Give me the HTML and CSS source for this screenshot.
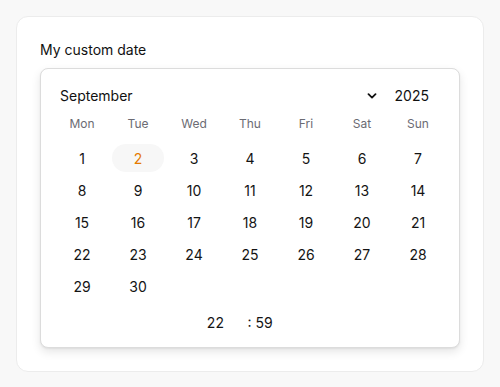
FILE: index.html
```html
<!DOCTYPE html>
<html>
<head>
<meta charset="utf-8">
<link rel="stylesheet" href="styles.css">
</head>
<body>
<div class="card">
  <div class="label">My custom date</div>
  <div class="picker">
    <div class="header">
      <span class="month">September</span>
      <svg class="chev" width="10" height="6" viewBox="0 0 10 6"><path d="M1.5 1.2 L5 4.6 L8.5 1.2" fill="none" stroke="#111" stroke-width="1.8" stroke-linecap="round" stroke-linejoin="round"/></svg>
      <span class="year">2025</span>
    </div>
    <div class="grid weekdays">
      <span>Mon</span><span>Tue</span><span>Wed</span><span>Thu</span><span>Fri</span><span>Sat</span><span>Sun</span>
    </div>
    <div class="grid days">
      <span>1</span><span class="today">2</span><span>3</span><span>4</span><span>5</span><span>6</span><span>7</span>
      <span>8</span><span>9</span><span>10</span><span>11</span><span>12</span><span>13</span><span>14</span>
      <span>15</span><span>16</span><span>17</span><span>18</span><span>19</span><span>20</span><span>21</span>
      <span>22</span><span>23</span><span>24</span><span>25</span><span>26</span><span>27</span><span>28</span>
      <span>29</span><span>30</span>
    </div>
    <div class="time">
      <span class="hour">22</span>
      <span class="minute">: 59</span>
    </div>
  </div>
</div>
</body>
</html>
```
FILE: styles.css
```css
html, body {
  margin: 0;
  padding: 0;
  background: #f8f8f8;
}
body {
  padding: 16px;
  font-family: Inter, "Noto Sans", sans-serif;
  color: #141414;
}
.card {
  width: 468px;
  height: 356px;
  box-sizing: border-box;
  background: #fff;
  border: 1px solid #ececec;
  border-radius: 12px;
  padding: 23px 23px 23px;
}
.label {
  font-size: 14px;
  line-height: 20px;
  height: 20px;
  margin-bottom: 8px;
  color: #111;
}
.picker {
  box-sizing: border-box;
  width: 420px;
  height: 280px;
  border: 1px solid #dcdcdc;
  border-radius: 8px;
  background: #fff;
  box-shadow: 0 4px 10px rgba(0,0,0,0.10), 0 1px 2px rgba(0,0,0,0.06);
  padding: 14px 13px 0;
}
.header {
  display: flex;
  align-items: center;
  height: 24px;
  padding: 0 17px 0 6px;
  font-size: 14px;
  color: #111;
}
.month { flex: 1; }
.chev { margin-right: 18px; margin-top: 1px; }
.year { font-size: 14px; }
.grid {
  display: grid;
  grid-template-columns: repeat(7, 56px);
}
.weekdays {
  margin-top: 7px;
  height: 20px;
  line-height: 20px;
  font-size: 12px;
  color: #6b6b73;
  text-align: center;
}
.days {
  margin-top: 8px;
  grid-auto-rows: 32px;
  font-size: 14px;
  color: #141414;
}
.days span {
  display: flex;
  align-items: center;
  justify-content: center;
  margin: 2px;
  border-radius: 14px;
}
.days .today {
  background: #f7f7f7;
  color: #e57a00;
}
.time {
  display: flex;
  justify-content: center;
  align-items: center;
  height: 20px;
  margin-top: 10px;
  padding-right: 36px;
  font-size: 14px;
}
.hour {
  width: 48px;
  text-align: center;
}
.minute {
  margin-left: 8px;
}
```
